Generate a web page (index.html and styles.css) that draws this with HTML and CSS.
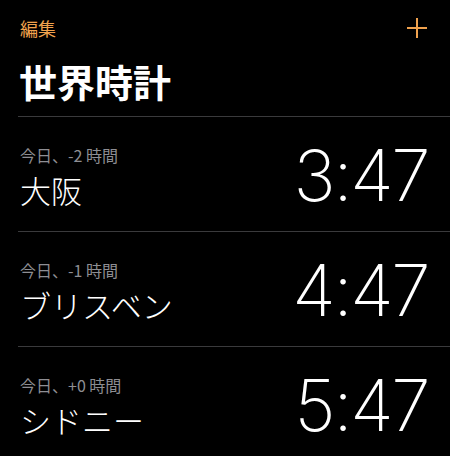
FILE: index.html
```html
<!DOCTYPE html>
<html lang="ja">
<head>
<meta charset="utf-8">
<link rel="stylesheet" href="styles.css">
</head>
<body>
<div class="app">
  <div class="topbar">
    <span class="edit">編集</span>
    <svg class="plus" width="22" height="22" viewBox="0 0 22 22"><path d="M11 1V21M1 11H21" stroke="#f0a24e" stroke-width="2" fill="none"/></svg>
  </div>
  <h1 class="title">世界時計</h1>
  <div class="list">
    <div class="row">
      <div class="info">
        <div class="offset">今日、-2 時間</div>
        <div class="city">大阪</div>
      </div>
      <div class="time">3:47</div>
    </div>
    <div class="row">
      <div class="info">
        <div class="offset">今日、-1 時間</div>
        <div class="city">ブリスベン</div>
      </div>
      <div class="time">4:47</div>
    </div>
    <div class="row">
      <div class="info">
        <div class="offset">今日、+0 時間</div>
        <div class="city">シドニー</div>
      </div>
      <div class="time">5:47</div>
    </div>
  </div>
</div>
</body>
</html>
```
FILE: styles.css
```css
html, body {
  margin: 0;
  padding: 0;
  background: #000;
}
.app {
  width: 450px;
  height: 456px;
  overflow: hidden;
  background: #000;
  color: #fff;
  font-family: "Noto Sans CJK JP", "Noto Sans", sans-serif;
}
.topbar {
  display: flex;
  justify-content: space-between;
  align-items: center;
  padding: 13px 22px 0 20px;
  height: 30px;
}
.edit {
  color: #f0a24e;
  font-size: 18px;
  line-height: 22px;
}
.plus {
  display: block;
}
.title {
  margin: 14px 0 0 19px;
  font-size: 38px;
  font-weight: 700;
  line-height: 48px;
  height: 59px;
}
.list {
  margin-left: 18px;
}
.row {
  display: flex;
  justify-content: space-between;
  align-items: flex-start;
  height: 115px;
  border-top: 1px solid #3a3a3c;
  padding: 28px 22px 0 0;
  box-sizing: border-box;
}
.info {
  padding-left: 2px;
}
.offset {
  color: #8e8e93;
  font-size: 16px;
  line-height: 20px;
}
.city {
  font-size: 31px;
  font-weight: 300;
  line-height: 38px;
  margin-top: 6px;
}
.time {
  font-family: Inter, Roboto, sans-serif;
  font-weight: 150;
  font-size: 71px;
  line-height: 60px;
  letter-spacing: -2.5px;
}
```
